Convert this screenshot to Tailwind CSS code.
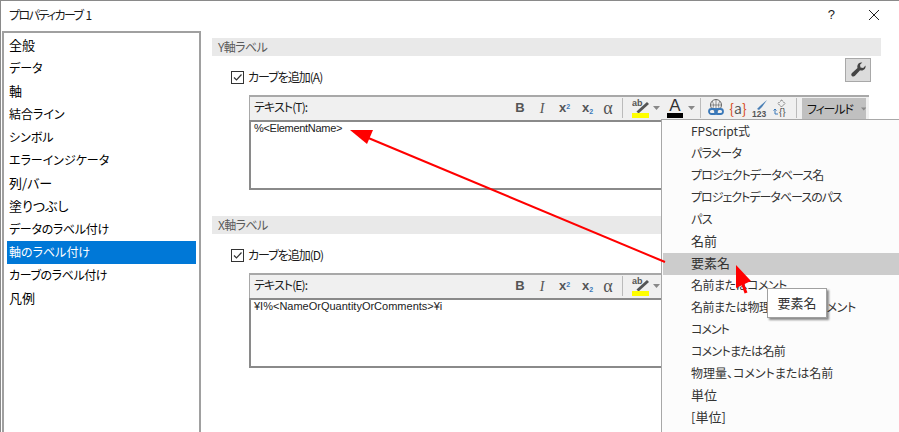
<!DOCTYPE html>
<html lang="ja"><head><meta charset="utf-8">
<script src="https://cdn.jsdelivr.net/npm/@tailwindcss/browser@4"></script>
</head>
<body class="bg-white">
<div class="relative w-[899px] h-[432px] overflow-hidden bg-white border-t border-l border-[#8a8a8a] text-[13px] [font-feature-settings:'palt'] text-[#1a1a1a] font-['Noto_Sans_CJK_JP','Liberation_Sans',sans-serif]">
  <div class="flex h-[30px] items-center justify-between pl-[8px] pr-[19px] pb-[3px]">
    <span class="text-[12px] tracking-[-1.6px]">プロパティカーブ <span class="ml-[2px]">1</span></span>
    <div class="flex items-center gap-[33px]">
      <span class="text-[13px] font-['Liberation_Sans',sans-serif]">?</span>
      <svg width="12" height="12" viewBox="0 0 12 12" fill="none" stroke="#222" stroke-width="1"><path d="M1 1 11 11M11 1 1 11"/></svg>
    </div>
  </div>
  <div class="flex">
    <ul class="ml-[1px] w-[199px] h-[401px] border-2 border-[#a0a0a0] border-b-0 pt-[1px] px-[3px] text-black text-[12px]">
      <li class="h-[23px] leading-[21px] pl-[2px] text-[13px]">全般</li>
      <li class="h-[23px] leading-[21px] pl-[2px]">データ</li>
      <li class="h-[23px] leading-[21px] pl-[2px] text-[13px]">軸</li>
      <li class="h-[23px] leading-[21px] pl-[2px]">結合ライン</li>
      <li class="h-[23px] leading-[21px] pl-[2px]">シンボル</li>
      <li class="h-[23px] leading-[21px] pl-[2px]">エラーインジケータ</li>
      <li class="h-[23px] leading-[21px] pl-[2px] text-[13px]">列/バー</li>
      <li class="h-[23px] leading-[21px] pl-[2px] text-[13px]">塗りつぶし</li>
      <li class="h-[23px] leading-[21px] pl-[2px] tracking-[-0.3px]">データのラベル付け</li>
      <li class="h-[23px] leading-[21px] pl-[2px] bg-[#0078d7] text-white">軸のラベル付け</li>
      <li class="h-[23px] leading-[21px] pl-[2px] tracking-[-0.4px]">カーブのラベル付け</li>
      <li class="h-[23px] leading-[21px] pl-[2px] text-[13px]">凡例</li>
    </ul>
    <div class="ml-[11px] w-[669px] pt-[7px]">
      <section class="h-[178px]">
        <div class="h-[18px] leading-[17px] bg-[#e9e9e9] pl-[6px] text-[#5a5a5a] text-[12px] tracking-[-0.6px]">Y軸ラベル</div>
        <div class="flex items-start justify-between h-[26px] mt-[2px] pl-[19px] pr-[10px]">
          <label class="flex items-center gap-[4px] mt-[10px] h-[18px]">
            <span class="w-[13px] h-[13px] border border-[#333] flex items-center justify-center"><svg width="11" height="11" viewBox="0 0 11 11" fill="none" stroke="#333" stroke-width="1.2"><path d="M2 5.500 4.500 8 9.500 2.500"/></svg></span>
            <span class="text-[12px] tracking-[-1px]">カーブを追加(A)</span>
          </label>
          <button class="w-[26px] h-[24px] bg-[#dcdcdc] border border-[#a8a8a8] flex items-center justify-center">
            <svg width="18" height="18" viewBox="0 0 18 18"><path d="M16.500 4.500c.5 2.500-1.200 5-4 5-.5 0-1 0-1.400-.2L6 14.800c-.9 1-2.300 1-3.100.2-.9-.9-.8-2.200.1-3.100l5.500-5C8.300 6.400 8.300 6 8.300 5.500c0-2.800 2.500-4.500 5-4l-2.300 2.300.5 2.700 2.700.5z" fill="#444"/></svg>
          </button>
        </div>
        <div class="mt-[11px] ml-[37px] w-[620px]">
          <div class="relative h-[25px] bg-[#f0f0f0] border-t-2 border-l border-[#a8a8a8] flex items-start pl-[4px]">
            <span class="h-[20px] leading-[20px] text-[12px] tracking-[-0.9px]">テキスト(T):</span>
            <div class="absolute left-[259px] top-0 h-[22px] flex items-center text-[#555] whitespace-nowrap">
              <b class="w-[22px] text-center font-['Liberation_Sans',sans-serif] text-[13px]">B</b>
              <i class="w-[22px] text-center font-['Liberation_Serif',serif] text-[14px]">I</i>
              <b class="w-[23px] text-center font-['Liberation_Sans',sans-serif] text-[13px]">x<sup class="text-[7px] text-[#3a78b8]">2</sup></b>
              <b class="w-[23px] text-center font-['Liberation_Sans',sans-serif] text-[13px]">x<sub class="text-[7px] text-[#3a78b8]">2</sub></b>
              <span class="w-[18px] text-center font-['Liberation_Serif',serif] text-[18px] leading-[18px]">α</span>
              <span class="ml-[5px] w-px h-[20px] bg-[#bbb]"></span>
              <svg class="ml-[9px]" width="17" height="20" viewBox="0 0 17 20"><text x="0" y="8" font-size="9" font-weight="700" fill="#555" font-family="Liberation Sans">ab</text><path d="M5.500 14.500 16 5" stroke="#555" stroke-width="3"/><rect x="0" y="15" width="17" height="5" fill="#ffff00"/></svg>
              <svg class="ml-[4px]" width="7" height="4" viewBox="0 0 7 4"><path d="M0 0h7L3.500 4z" fill="#888"/></svg>
              <div class="ml-[7px] w-[16px] h-[20px] flex flex-col items-center"><span class="h-[15px] leading-[15px] text-[17px] font-['Liberation_Sans',sans-serif] text-[#333]">A</span><span class="w-[16px] h-[5px] bg-black"></span></div>
              <svg class="ml-[5px]" width="7" height="4" viewBox="0 0 7 4"><path d="M0 0h7L3.500 4z" fill="#888"/></svg>
              <span class="ml-[5px] w-px h-[20px] bg-[#bbb]"></span>
              <svg class="ml-[7px]" width="16" height="18" viewBox="0 0 16 18" fill="none"><circle cx="8" cy="6" r="5.500" stroke="#666"/><path d="M2.500 6h11M8 .5v11M4 2c2 3 2 6 0 8M12 2c-2 3-2 6 0 8" stroke="#666" stroke-width=".7"/><rect x="1" y="10" width="8" height="5" rx="2.500" stroke="#3a78b8" stroke-width="1.800"/><rect x="7" y="10" width="8" height="5" rx="2.500" stroke="#3a78b8" stroke-width="1.800"/></svg>
              <span class="ml-[5px] w-[18px] text-center text-[14px] text-[#d84a20]">{<span class="text-[#555]">a</span>}</span>
              <svg class="ml-[5px]" width="16" height="18" viewBox="0 0 16 18"><path d="M15 1 8 7l-3 3 2 1 3-3z" fill="#4a7fb5"/><text x="0" y="17.500" font-size="8.500" font-weight="700" fill="#555" font-family="Liberation Sans">123</text></svg>
              <svg class="ml-[5px]" width="17" height="18" viewBox="0 0 17 18" fill="none" stroke="#666"><path d="M8.500 1 12 4.500 8.500 8 5 4.500z" stroke-dasharray="2 1"/><path d="M2 10v5h3M0.500 11.500 2 10l1.500 1.500" stroke="#3a78b8"/><text x="6" y="17" font-size="10" fill="#555" stroke="none" font-family="Liberation Sans">{}</text></svg>
              <span class="ml-[6px] w-px h-[20px] bg-[#bbb]"></span>
              <span class="ml-[5px] w-[64px] h-[22px] mt-[2px] bg-[#c0c0c0] flex items-center pl-[5px] gap-[8px] text-[#111]"><span class="text-[12px] tracking-[-1.2px]">フィールド</span><svg width="7" height="4" viewBox="0 0 7 4"><path d="M0 0h7L3.500 4z" fill="#888"/></svg></span>
            </div>
          </div>
          <div class="h-[70px] border-2 border-[#8a8a8a] border-r-0 pl-[3px] text-[11px] leading-[13px] tracking-[-0.3px] text-[#222] font-['Liberation_Sans',sans-serif]">%&lt;ElementName&gt;</div>
        </div>
      </section>
      <section>
        <div class="h-[18px] leading-[17px] bg-[#e9e9e9] pl-[6px] text-[#5a5a5a] text-[12px] tracking-[-0.6px]">X軸ラベル</div>
        <div class="flex items-start h-[26px] mt-[2px] pl-[19px]">
          <label class="flex items-center gap-[4px] mt-[10px] h-[18px]">
            <span class="w-[13px] h-[13px] border border-[#333] flex items-center justify-center"><svg width="11" height="11" viewBox="0 0 11 11" fill="none" stroke="#333" stroke-width="1.2"><path d="M2 5.500 4.500 8 9.500 2.500"/></svg></span>
            <span class="text-[12px] tracking-[-1px]">カーブを追加(D)</span>
          </label>
        </div>
        <div class="mt-[11px] ml-[37px] w-[620px]">
          <div class="relative h-[25px] bg-[#f0f0f0] border-t-2 border-l border-[#a8a8a8] flex items-start pl-[4px]">
            <span class="h-[20px] leading-[20px] text-[12px] tracking-[-0.9px]">テキスト(E):</span>
            <div class="absolute left-[259px] top-0 h-[22px] flex items-center text-[#555] whitespace-nowrap">
              <b class="w-[22px] text-center font-['Liberation_Sans',sans-serif] text-[13px]">B</b>
              <i class="w-[22px] text-center font-['Liberation_Serif',serif] text-[14px]">I</i>
              <b class="w-[23px] text-center font-['Liberation_Sans',sans-serif] text-[13px]">x<sup class="text-[7px] text-[#3a78b8]">2</sup></b>
              <b class="w-[23px] text-center font-['Liberation_Sans',sans-serif] text-[13px]">x<sub class="text-[7px] text-[#3a78b8]">2</sub></b>
              <span class="w-[18px] text-center font-['Liberation_Serif',serif] text-[18px] leading-[18px]">α</span>
              <span class="ml-[5px] w-px h-[20px] bg-[#bbb]"></span>
              <svg class="ml-[9px]" width="17" height="20" viewBox="0 0 17 20"><text x="0" y="8" font-size="9" font-weight="700" fill="#555" font-family="Liberation Sans">ab</text><path d="M5.500 14.500 16 5" stroke="#555" stroke-width="3"/><rect x="0" y="15" width="17" height="5" fill="#ffff00"/></svg>
              <svg class="ml-[4px]" width="7" height="4" viewBox="0 0 7 4"><path d="M0 0h7L3.500 4z" fill="#888"/></svg>
            </div>
          </div>
          <div class="h-[70px] border-2 border-[#8a8a8a] border-r-0 pl-[3px] text-[11px] leading-[13px] text-[#222] font-['Liberation_Sans',sans-serif]">¥I%&lt;NameOrQuantityOrComments&gt;¥i</div>
        </div>
      </section>
    </div>
  </div>

  <div class="absolute left-[660px] top-[118px] w-[240px] h-[320px] bg-[#fcfcfc] border border-[#a8a8a8] pt-[1px] pl-[1px] text-[#333] text-[12px]">
    <div class="h-[22px] leading-[20px] pl-[28px]">FPScript式</div>
    <div class="h-[22px] leading-[20px] pl-[28px] tracking-[-0.8px]">パラメータ</div>
    <div class="h-[22px] leading-[20px] pl-[28px] tracking-[-0.9px]">プロジェクトデータベース名</div>
    <div class="h-[22px] leading-[20px] pl-[28px] tracking-[-1px]">プロジェクトデータベースのパス</div>
    <div class="h-[22px] leading-[20px] pl-[28px] tracking-[-0.5px]">パス</div>
    <div class="h-[22px] leading-[20px] pl-[28px] text-[13px]">名前</div>
    <div class="h-[22px] leading-[20px] pl-[28px] text-[13px] bg-[#cccccc]">要素名</div>
    <div class="h-[22px] leading-[20px] pl-[28px] tracking-[-0.5px]">名前またはコメント</div>
    <div class="h-[22px] leading-[20px] pl-[28px] tracking-[-0.4px]">名前または物理量またはコメント</div>
    <div class="h-[22px] leading-[20px] pl-[28px] tracking-[-1px]">コメント</div>
    <div class="h-[22px] leading-[20px] pl-[28px] tracking-[-0.7px]">コメントまたは名前</div>
    <div class="h-[22px] leading-[20px] pl-[28px]">物理量、コメントまたは名前</div>
    <div class="h-[22px] leading-[20px] pl-[28px] text-[13px]">単位</div>
    <div class="h-[22px] leading-[20px] pl-[28px] text-[13px]">[単位]</div>
  </div>

  <svg class="absolute left-[-1px] top-[-1px]" width="899" height="432" viewBox="0 0 899 432" fill="none">
    <path d="M665 262 366 137" stroke="#f00" stroke-width="2"/>
    <path d="M350 130 373 130 367 144z" fill="#f00"/>
    <path d="M746 293 741 279" stroke="#f00" stroke-width="3"/>
    <path d="M736 265 751 281 736 288z" fill="#f00"/>
  </svg>

  <div class="absolute left-[766px] top-[287px] w-[60px] h-[30px] bg-white border border-[#a0a0a0] shadow-[2px_2px_2px_rgba(0,0,0,0.45)] flex items-center justify-center text-[#333]">要素名</div>
</div>
</body></html>
